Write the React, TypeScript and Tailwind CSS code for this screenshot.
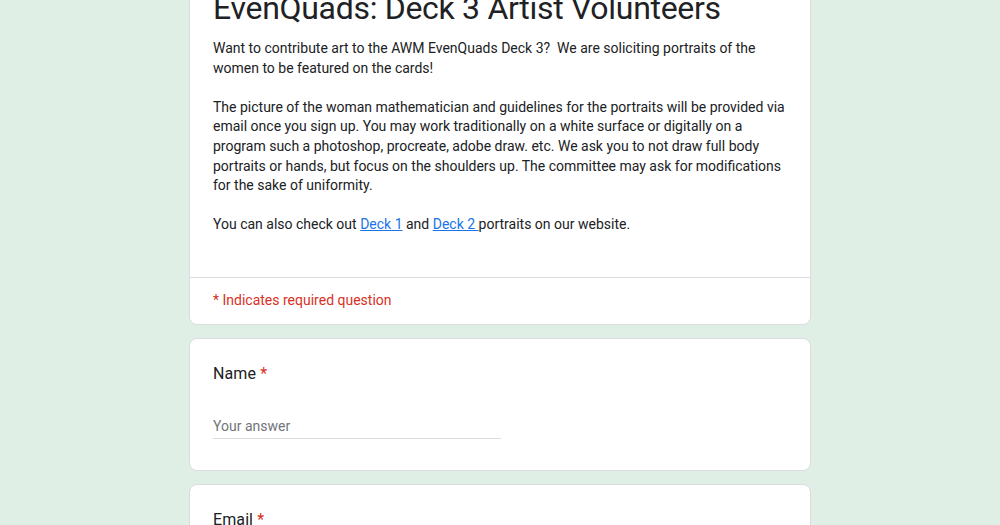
import React from 'react';

const font = { fontFamily: 'Roboto, "Liberation Sans", Arial, sans-serif' };

const intro = [
  'Want to contribute art to the AWM EvenQuads Deck 3?  We are soliciting portraits of the',
  'women to be featured on the cards!',
];

const guide = [
  'The picture of the woman mathematician and guidelines for the portraits will be provided via',
  'email once you sign up. You may work traditionally on a white surface or digitally on a',
  'program such a photoshop, procreate, adobe draw. etc. We ask you to not draw full body',
  'portraits or hands, but focus on the shoulders up. The committee may ask for modifications',
  'for the sake of uniformity.',
];

const Lines: React.FC<{ lines: string[] }> = ({ lines }) => (
  <>
    {lines.map((l, i) => (
      <div key={i} className="whitespace-pre">{l}</div>
    ))}
  </>
);

const Question: React.FC<{ label: string; input?: boolean }> = ({ label, input = true }) => (
  <div className="bg-white rounded-lg border border-[#dadce0] px-[23px] pt-[23px] pb-[31px]">
    <div className="text-[16px] leading-[24px] text-[#202124] tracking-[0.1px]">
      {label} <span className="text-[#d93025]">*</span>
    </div>
    {input && (
      <div className="mt-[30px] w-[288px] border-b border-[#dadce0] pb-[2px] text-[14px] leading-[20px] text-[#70757a]">
        Your answer
      </div>
    )}
  </div>
);

export default function App() {
  return (
    <div className="h-[525px] overflow-hidden bg-[#dfefe5]" style={font}>
      <div className="w-[622px] mx-auto -mt-[36px] flex flex-col gap-[13px]">
        <div className="bg-white rounded-lg border border-[#dadce0]">
          <div className="px-[23px] pt-[23px] pb-[42px]">
            <h1 className="text-[32px] leading-[40px] text-[#202124] font-normal tracking-[-0.3px]">
              EvenQuads: Deck 3 Artist Volunteers
            </h1>
            <div className="mt-[11px] text-[14px] leading-[19.6px] text-[#202124]">
              <Lines lines={intro} />
              <div className="h-[19.6px]" />
              <Lines lines={guide} />
              <div className="h-[19.6px]" />
              <div className="whitespace-pre">
                You can also check out{' '}
                <a className="text-[#1a73e8] underline" href="#">Deck 1</a> and{' '}
                <a className="text-[#1a73e8] underline" href="#">Deck 2 </a>portraits on our website.
              </div>
            </div>
          </div>
          <div className="border-t border-[#dadce0] px-[23px] pt-[12px] pb-[14px] text-[14px] leading-[20px] text-[#d93025]">
            * Indicates required question
          </div>
        </div>
        <Question label="Name" />
        <Question label="Email" />
      </div>
    </div>
  );
}
